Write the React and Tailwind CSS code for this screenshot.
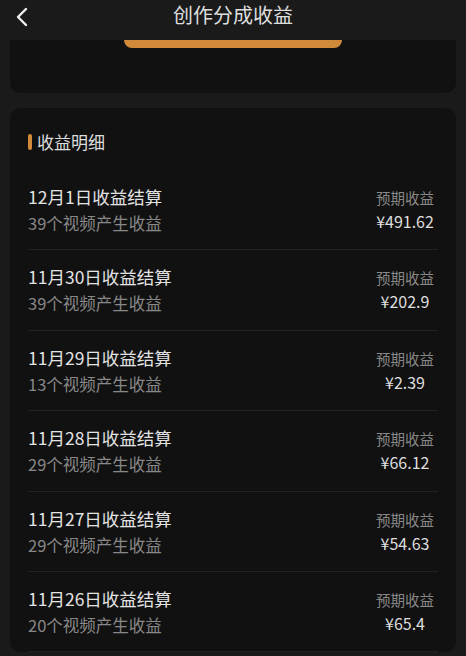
import React from 'react';

const rows = [
  { date: '12月1日', count: 39, amount: '¥491.62' },
  { date: '11月30日', count: 39, amount: '¥202.9' },
  { date: '11月29日', count: 13, amount: '¥2.39' },
  { date: '11月28日', count: 29, amount: '¥66.12' },
  { date: '11月27日', count: 29, amount: '¥54.63' },
  { date: '11月26日', count: 20, amount: '¥65.4' },
];

const font = { fontFamily: '"Noto Sans CJK SC", "Noto Sans", sans-serif' };

const IncomeRow = ({ item }) => (
  <div className="flex items-center justify-between border-b border-[#222222] pt-[15px] pb-[14.4px]">
    <div>
      <div className="text-[17.5px] leading-[24px] text-[#e3e3e3]">{item.date}收益结算</div>
      <div className="mt-[2px] text-[16.5px] leading-[24px] text-[#888888]">{item.count}个视频产生收益</div>
    </div>
    <div className="flex flex-col items-center pr-[4px]">
      <div className="text-[14.5px] leading-[20px] text-[#888888]">预期收益</div>
      <div className="mt-[2px] text-[16px] leading-[22px] text-[#dedede]">{item.amount}</div>
    </div>
  </div>
);

const App = () => {
  return (
    <div className="h-[656px] w-full overflow-hidden bg-[#1a1a1a]" style={font}>
      {/* Header */}
      <div className="relative flex h-[40px] items-center justify-center">
        <button className="absolute left-[12px] top-[5px] flex h-[24px] w-[20px] items-center justify-center">
          <svg width="14" height="20" viewBox="0 0 14 20" fill="none">
            <path d="M11 2 L3 10 L11 18" stroke="#f2f2f2" strokeWidth="2.4" strokeLinecap="round" strokeLinejoin="round" />
          </svg>
        </button>
        <h1 className="-mt-[10px] text-[20px] leading-[28px] text-[#dedede]">创作分成收益</h1>
      </div>

      {/* Summary card (scrolled) */}
      <div className="mx-[10px] flex h-[53px] justify-center rounded-b-[10px] bg-[#111111]">
        <div className="h-[8px] w-[218px] rounded-b-[8px] bg-[#d08a3a]" />
      </div>

      {/* Income details */}
      <div className="mx-[10px] mt-[15px] rounded-[10px] bg-[#111111] px-[18px] pt-[22px]">
        <div className="flex items-center">
          <span className="mr-[5px] h-[16px] w-[4px] rounded-full bg-[#d08a3a]" />
          <h2 className="text-[17px] leading-[24px] text-[#dedede]">收益明细</h2>
        </div>
        <div className="mt-[16px]">
          {rows.map((item) => (
            <IncomeRow key={item.date} item={item} />
          ))}
        </div>
      </div>
    </div>
  );
};

export default App;
